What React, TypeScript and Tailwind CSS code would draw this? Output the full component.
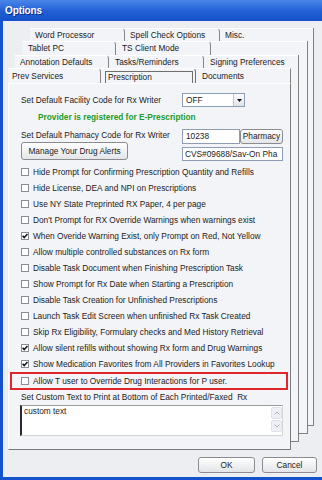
import React from "react";

function Check({ checked }: { checked?: boolean }) {
  return (
    <div className="w-[8px] h-[8px] border border-[#8b8d93] bg-white flex items-center justify-center shrink-0">
      {checked && (
        <svg width="6" height="6" viewBox="0 0 6 6">
          <path d="M0.6 2.8 L2.2 4.6 L5.5 1" fill="none" stroke="#111" strokeWidth="1.5" />
        </svg>
      )}
    </div>
  );
}

function Tab({ label, cls, last }: { label: string; cls: string; last?: boolean }) {
  return (
    <div
      className={`h-full flex items-center border-t border-t-white ${last ? "" : "border-r border-r-[#858585] rounded-tr-[4px]"} ${cls}`}
    >
      <span className="whitespace-nowrap">{label}</span>
    </div>
  );
}

const rows: { t: string; c?: boolean }[] = [
  { t: "Hide Prompt for Confirming Prescription Quantity and Refills" },
  { t: "Hide License, DEA and NPI on Prescriptions" },
  { t: "Use NY State Preprinted RX Paper, 4 per page" },
  { t: "Don't Prompt for RX Override Warnings when warnings exist" },
  { t: "When Overide Warning Exist, only Prompt on Red, Not Yellow", c: true },
  { t: "Allow multiple controlled substances on Rx form" },
  { t: "Disable Task Document when Finishing Prescription Task" },
  { t: "Show Prompt for Rx Date when Starting a Prescription" },
  { t: "Disable Task Creation for Unfinished Prescriptions" },
  { t: "Launch Task Edit Screen when unfinished Rx Task Created" },
  { t: "Skip Rx Eligibility, Formulary checks and Med History Retrieval" },
  { t: "Allow silent refills without showing Rx form and Drug Warnings", c: true },
  { t: "Show Medication Favorites from All Providers in Favorites Lookup", c: true },
];

function Btn({ children, cls }: { children: React.ReactNode; cls: string }) {
  return (
    <div
      className={`flex items-center justify-center border border-[#8a8c90] rounded-[3px] bg-gradient-to-b from-white to-[#e4e5e8] text-[#1b1b1b] whitespace-nowrap ${cls}`}
    >
      {children}
    </div>
  );
}

export default function App() {
  return (
    <div className="w-[322px] h-[480px] flex flex-col bg-[#1552cc] font-['Liberation_Sans',Arial,sans-serif] text-[8.3px] text-[#1b1b1b] overflow-hidden">
      {/* Title bar */}
      <div className="h-[21px] shrink-0 bg-gradient-to-b from-[#4a86e8] via-[#2461d6] to-[#1450c8] flex items-center pl-[5px]">
        <span className="text-white font-bold text-[10px] tracking-[-0.1px] [text-shadow:1px_1px_0_#0a2f8a]">Options</span>
      </div>
      {/* Body */}
      <div className="flex-1 ml-[3px] mb-[3px] bg-[#eceef2] pt-[7px] flex flex-col">
        {/* Box 1 (row 1) */}
        <div className="ml-[27px] w-[284px] bg-[#f3f4f8] border-r border-b border-[#808080] flex flex-col">
          <div className="h-[13px] flex">
            <Tab label="Word Processor" cls="w-[95px] pl-[5px]" />
            <Tab label="Spell Check Options" cls="w-[95px] pl-[5px]" />
            <Tab label="Misc." cls="flex-1 pl-[5px]" last />
          </div>
          {/* Box 2 (row 2) */}
          <div className="-ml-[8px] -mb-[9px] w-[286px] bg-[#f3f4f8] border-r border-b border-[#808080] flex flex-col">
            <div className="h-[14px] flex">
              <Tab label="Tablet PC" cls="w-[94px] pl-[6px]" />
              <Tab label="TS Client Mode" cls="w-[95px] pl-[6px]" />
              <div className="flex-1 border-t border-t-white" />
            </div>
            {/* Box 3 (row 3) */}
            <div className="-ml-[7px] -mb-[9px] w-[284px] bg-[#f3f4f8] border-r border-b border-[#808080] flex flex-col">
              <div className="h-[13px] flex">
                <Tab label="Annotation Defaults" cls="w-[94px] pl-[5px]" />
                <Tab label="Tasks/Reminders" cls="w-[95px] pl-[6px]" />
                <Tab label="Signing Preferences" cls="flex-1 pl-[6px]" last />
              </div>
              {/* Box 4 (main) */}
              <div className="-ml-[7px] -mb-[9px] w-[283px] flex flex-col">
                <div className="h-[15px] flex bg-[#f3f4f8]">
                  <Tab label="Prev Services" cls="w-[93px] pl-[4px]" />
                  <div className="w-[95px] h-full flex items-center border-t border-t-white border-r border-r-[#6f6f6f] rounded-tr-[4px] pl-[4px]">
                    <div className="w-[88px] h-[13px] mt-[2px] border border-[#6e6e6e] flex items-center pl-[2px]">
                      Prescription
                    </div>
                  </div>
                  <Tab label="Documents" cls="flex-1 pl-[6px] border-r border-r-[#808080]" last />
                </div>
                {/* Page */}
                <div className="h-[367px] border border-l-white border-t-white border-r-[#7a7a7a] border-b-[#7a7a7a] bg-[#f3f4f8] pl-[12px] pr-[6px] pt-[9px] flex flex-col">
                  <div className="flex items-center h-[14px]">
                    <div className="w-[161px] whitespace-nowrap">Set Default Facility Code for Rx Writer</div>
                    <div className="w-[63px] h-[14px] border border-[#8e9cb5] bg-white flex items-center">
                      <span className="flex-1 pl-[3px]">OFF</span>
                      <div className="w-[11px] h-[12px] bg-gradient-to-b from-white to-[#dfe2e8] border-l border-[#c4c8d0] flex items-center justify-center">
                        <svg width="5" height="3" viewBox="0 0 5 3">
                          <path d="M0 0 H5 L2.5 3 Z" fill="#111" />
                        </svg>
                      </div>
                    </div>
                  </div>
                  <div className="mt-[3px] h-[14px] pl-[17px] flex items-center font-bold text-[#1e9b2a] whitespace-nowrap">
                    Provider is registered for E-Prescription
                  </div>
                  <div className="mt-[4px] flex">
                    <div className="w-[161px] flex flex-col">
                      <div className="h-[14px] flex items-center whitespace-nowrap">
                        Set Default Phamacy Code for Rx Writer
                      </div>
                      <Btn cls="w-[107px] h-[18px]">Manage Your Drug Alerts</Btn>
                    </div>
                    <div className="flex flex-col">
                      <div className="mt-[1px] flex">
                        <div className="w-[58px] h-[15px] border border-[#8e9cb5] bg-white flex items-center pl-[3px]">10238</div>
                        <Btn cls="w-[43px] h-[15px]">Pharmacy</Btn>
                      </div>
                      <div className="mt-[3px] w-[101px] h-[14px] border border-[#8e9cb5] bg-white flex items-center pl-[2px] overflow-hidden whitespace-nowrap">
                        CVS#09688/Sav-On Pha
                      </div>
                    </div>
                  </div>
                  <div className="mt-[3px] flex flex-col">
                    {rows.map((r) => (
                      <div key={r.t} className="h-[16px] flex items-center gap-[4px] whitespace-nowrap">
                        <Check checked={r.c} />
                        <span>{r.t}</span>
                      </div>
                    ))}
                    <div className="-ml-[11px] -mr-[4px] h-[18px] border-2 border-[#e0262a] pl-[9px] flex items-center gap-[4px] whitespace-nowrap">
                      <Check />
                      <span>Allow T user to Override Drug Interactions for P user.</span>
                    </div>
                  </div>
                  <div className="h-[14px] flex items-center whitespace-nowrap">
                    Set Custom Text to Print at Bottom of Each Printed/Faxed&nbsp; Rx
                  </div>
                  <div className="mt-[1px] -ml-[1px] w-[263px] h-[31px] bg-white border-t border-t-[#9a9a9a] border-l-2 border-l-[#2a2a2a] border-r border-r-[#d6d6d6] border-b border-b-[#d6d6d6] flex">
                    <div className="flex-1 pl-[2px] pt-[1px] leading-[9px]">custom text</div>
                    <div className="w-[11px] flex flex-col gap-[1px] pt-[1px]">
                      <div className="h-[12px] bg-[#eef0f6] border border-[#dde1ea] rounded-[2px] flex items-center justify-center">
                        <svg width="6" height="4" viewBox="0 0 6 4">
                          <path d="M0.5 3.5 L3 1 L5.5 3.5" fill="none" stroke="#a8b0c0" strokeWidth="1" />
                        </svg>
                      </div>
                      <div className="h-[12px] bg-[#eef0f6] border border-[#dde1ea] rounded-[2px] flex items-center justify-center">
                        <svg width="6" height="4" viewBox="0 0 6 4">
                          <path d="M0.5 0.5 L3 3 L5.5 0.5" fill="none" stroke="#a8b0c0" strokeWidth="1" />
                        </svg>
                      </div>
                    </div>
                  </div>
                </div>
              </div>
            </div>
          </div>
        </div>
        {/* Buttons */}
        <div className="mt-[31px] flex justify-end pr-[5px] gap-[7px]">
          <Btn cls="w-[57px] h-[16px]">OK</Btn>
          <Btn cls="w-[55px] h-[16px]">Cancel</Btn>
        </div>
      </div>
    </div>
  );
}
